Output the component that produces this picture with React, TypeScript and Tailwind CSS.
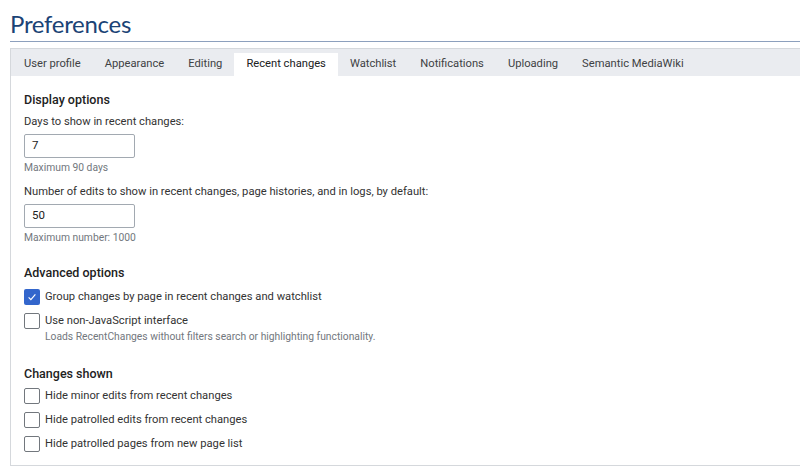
const tabs = [
  "User profile",
  "Appearance",
  "Editing",
  "Recent changes",
  "Watchlist",
  "Notifications",
  "Uploading",
  "Semantic MediaWiki",
];

function Checkbox({ checked }: { checked?: boolean }) {
  if (checked) {
    return (
      <span className="flex h-4 w-4 shrink-0 items-center justify-center rounded-[2px] bg-[#3366cc]">
        <svg viewBox="0 0 16 16" className="h-3 w-3" fill="none" stroke="white" strokeWidth="1.6">
          <path d="M3.5 8.5l3 3 6-7" />
        </svg>
      </span>
    );
  }
  return <span className="h-4 w-4 shrink-0 rounded-[2px] border border-[#72777d] bg-white" />;
}

function Option({ label, hint, checked }: { label: string; hint?: string; checked?: boolean }) {
  return (
    <div className="flex gap-[5px]">
      <Checkbox checked={checked} />
      <div className="flex flex-col">
        <span className="text-[11.2px] leading-4 text-[#333]">{label}</span>
        {hint && <span className="text-[10.3px] leading-[15px] text-[#72777d]">{hint}</span>}
      </div>
    </div>
  );
}

function NumberField({ label, value, hint }: { label: string; value: string; hint: string }) {
  return (
    <div className="flex flex-col">
      <span className="text-[11.2px] leading-[15px] text-[#333]">{label}</span>
      <div className="mt-[5px] flex h-[24px] w-[111px] items-center rounded-[2px] border border-[#a2a9b1] px-[7px] text-[11.5px] text-[#222]">
        {value}
      </div>
      <span className="mt-[2px] text-[10.3px] leading-[15px] text-[#72777d]">{hint}</span>
    </div>
  );
}

export default function App() {
  return (
    <div className="h-[473px] w-[800px] overflow-hidden bg-white font-['Roboto',sans-serif]">
      <h1 className="ml-[10px] border-b border-[#8da0bd] pt-[7px] pb-[1px] font-['Lato',sans-serif] text-[24px] leading-[33px] tracking-[-0.3px] text-[#1b4376]">
        Preferences
      </h1>
      <div className="mt-[6px] ml-[10px] h-[418px] w-[800px] border border-[#d5d8dc]">
        <div className="flex h-[27px] items-end bg-[#eaecf0] pl-[1px]">
          {tabs.map((t) => (
            <div
              key={t}
              className={
                t === "Recent changes"
                  ? "flex h-[23px] items-center bg-white px-[12px] text-[11.2px] text-[#202122]"
                  : "flex h-[23px] items-center px-[12px] text-[11.2px] text-[#404244]"
              }
            >
              {t}
            </div>
          ))}
        </div>
        <div className="px-[13px] pt-[14px]">
          <h2 className="text-[12.5px] leading-5 font-medium text-[#222]">Display options</h2>
          <div className="mt-[4px] flex flex-col gap-[9px]">
            <NumberField label="Days to show in recent changes:" value="7" hint="Maximum 90 days" />
            <NumberField
              label="Number of edits to show in recent changes, page histories, and in logs, by default:"
              value="50"
              hint="Maximum number: 1000"
            />
          </div>
          <h2 className="mt-[18px] text-[12.5px] leading-5 font-medium text-[#222]">Advanced options</h2>
          <div className="mt-[6px] flex flex-col gap-2">
            <Option label="Group changes by page in recent changes and watchlist" checked />
            <Option
              label="Use non-JavaScript interface"
              hint="Loads RecentChanges without filters search or highlighting functionality."
            />
          </div>
          <h2 className="mt-[20px] text-[12.5px] leading-5 font-medium text-[#222]">Changes shown</h2>
          <div className="mt-[4px] flex flex-col gap-2">
            <Option label="Hide minor edits from recent changes" />
            <Option label="Hide patrolled edits from recent changes" />
            <Option label="Hide patrolled pages from new page list" />
          </div>
        </div>
      </div>
    </div>
  );
}
